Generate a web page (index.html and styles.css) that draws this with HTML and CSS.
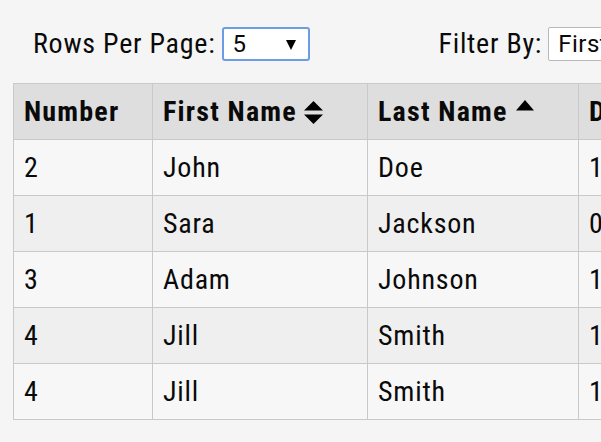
FILE: index.html
```html
<!DOCTYPE html>
<html>
<head>
<meta charset="utf-8">
<link rel="stylesheet" href="styles.css">
</head>
<body>
<div class="page">
  <div class="toolbar">
    <label class="field rows">
      <span class="field-label">Rows Per Page:</span>
      <span class="select-wrap focus">
        <select class="select"><option>5</option><option>10</option></select>
        <svg class="arrow" width="10" height="10" viewBox="0 0 10 10"><path d="M0 0H10L5 10Z" fill="#000"/></svg>
      </span>
    </label>
    <label class="field filter">
      <span class="field-label">Filter By:</span>
      <span class="select-wrap plain">
        <select class="select"><option>First Name</option><option>Last Name</option></select>
      </span>
    </label>
  </div>
  <table class="grid">
    <thead>
      <tr>
        <th class="c1">Number</th>
        <th class="c2">First Name<svg class="sort" width="19" height="23" viewBox="0 0 19 23"><path d="M9.5 0L19 9.5H0Z M0 13.5H19L9.5 23Z" fill="#000"/></svg></th>
        <th class="c3">Last Name<svg class="sort-up" width="18" height="11" viewBox="0 0 18 11"><path d="M9 0L18 10.5H0Z" fill="#000"/></svg></th>
        <th class="c4">Date Of Birth</th>
      </tr>
    </thead>
    <tbody>
      <tr><td>2</td><td>John</td><td>Doe</td><td>12/04/1990</td></tr>
      <tr><td>1</td><td>Sara</td><td>Jackson</td><td>05/11/1988</td></tr>
      <tr><td>3</td><td>Adam</td><td>Johnson</td><td>10/22/1985</td></tr>
      <tr><td>4</td><td>Jill</td><td>Smith</td><td>11/01/1992</td></tr>
      <tr><td>4</td><td>Jill</td><td>Smith</td><td>11/01/1992</td></tr>
    </tbody>
  </table>
</div>
</body>
</html>
```

FILE: styles.css
```css
html, body {
  margin: 0;
  padding: 0;
  background: #f5f5f5;
  overflow: hidden;
}
.page {
  width: 900px;
  padding: 27px 0 0 13px;
  font-family: Roboto, "Liberation Sans", sans-serif;
  font-stretch: 75%;
  color: #0a0a0a;
}
.toolbar {
  display: flex;
  align-items: center;
  height: 34px;
}
.field {
  display: flex;
  align-items: center;
  gap: 7px;
}
.rows { margin-left: 20px; }
.filter { margin-left: 128px; gap: 6px; }
.field-label {
  font-size: 28px;
  line-height: 34px;
  letter-spacing: 0.75px;
}
.select-wrap {
  position: relative;
  display: inline-block;
  height: 34px;
  box-sizing: border-box;
  background: #fff;
}
.select-wrap.focus {
  width: 88px;
  border: 2px solid #6d9be6;
  border-radius: 3px;
}
.select-wrap.plain {
  width: 160px;
  border: 1px solid #b9b9b9;
  border-radius: 2px;
}
.select {
  appearance: none;
  -webkit-appearance: none;
  border: 0;
  outline: none;
  background: transparent;
  font-family: Roboto, "Liberation Sans", sans-serif;
  font-size: 24px;
  letter-spacing: 0.5px;
  color: #0a0a0a;
  height: 100%;
  width: 100%;
  padding: 0 0 0 8px;
  margin: 0;
}
.plain .select { padding-left: 9px; }
.arrow {
  position: absolute;
  right: 12px;
  top: 11px;
  pointer-events: none;
}
.grid {
  margin-top: 22px;
  border-collapse: collapse;
  table-layout: fixed;
  width: 765px;
  font-size: 28px;
  letter-spacing: 0.8px;
}
.grid th, .grid td {
  border: 1px solid #c9c9c9;
  height: 56px;
  padding: 0 0 0 10px;
  text-align: left;
  white-space: nowrap;
  box-sizing: border-box;
}
.grid th {
  background: #dedede;
  font-weight: 700;
  letter-spacing: 1.2px;
}
.c1 { width: 139px; }
.c2 { width: 215px; }
.c3 { width: 211px; }
.c4 { width: 200px; }
.grid tbody tr:nth-child(odd) td { background: #f7f7f7; }
.grid tbody tr:nth-child(even) td { background: #efefef; }
.sort { vertical-align: -3px; margin-left: 7px; }
.sort-up { vertical-align: 10px; margin-left: 8px; }
```
